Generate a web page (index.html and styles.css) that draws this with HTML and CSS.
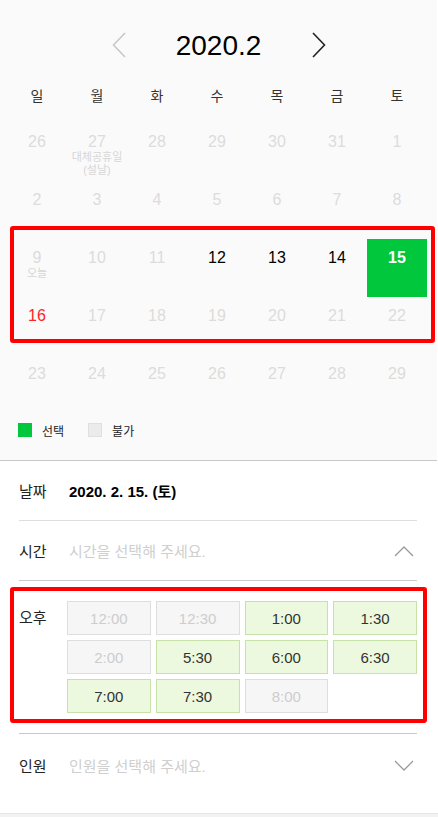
FILE: index.html
```html
<!DOCTYPE html>
<html lang="ko">
<head>
<meta charset="utf-8">
<title>예약</title>
<link rel="stylesheet" href="styles.css">
</head>
<body>
<div class="page">
  <section class="calendar">
    <div class="cal-head">
      <svg class="arrow prev" width="14" height="26" viewBox="0 0 14 26"><polyline points="13,1 1.5,13 13,25" fill="none" stroke="#c8c8c8" stroke-width="1.6"/></svg>
      <div class="title">2020.2</div>
      <svg class="arrow next" width="14" height="26" viewBox="0 0 14 26"><polyline points="1,1 12.5,13 1,25" fill="none" stroke="#222" stroke-width="1.6"/></svg>
    </div>
    <div class="weekdays">
      <span>일</span><span>월</span><span>화</span><span>수</span><span>목</span><span>금</span><span>토</span>
    </div>
    <div class="days">
      <div class="day off">26</div>
      <div class="day off">27<span class="note">대체공휴일<br>(설날)</span></div>
      <div class="day off">28</div>
      <div class="day off">29</div>
      <div class="day off">30</div>
      <div class="day off">31</div>
      <div class="day off">1</div>
      <div class="day off">2</div>
      <div class="day off">3</div>
      <div class="day off">4</div>
      <div class="day off">5</div>
      <div class="day off">6</div>
      <div class="day off">7</div>
      <div class="day off">8</div>
      <div class="day off">9<span class="note">오늘</span></div>
      <div class="day off">10</div>
      <div class="day off">11</div>
      <div class="day">12</div>
      <div class="day">13</div>
      <div class="day">14</div>
      <div class="day selected">15</div>
      <div class="day holiday">16</div>
      <div class="day off">17</div>
      <div class="day off">18</div>
      <div class="day off">19</div>
      <div class="day off">20</div>
      <div class="day off">21</div>
      <div class="day off">22</div>
      <div class="day off">23</div>
      <div class="day off">24</div>
      <div class="day off">25</div>
      <div class="day off">26</div>
      <div class="day off">27</div>
      <div class="day off">28</div>
      <div class="day off">29</div>
    </div>
    <div class="legend">
      <span class="swatch sw-sel"></span><span class="legend-text">선택</span>
      <span class="swatch sw-off"></span><span class="legend-text">불가</span>
    </div>
  </section>

  <section class="details">
    <div class="row row-date">
      <span class="label">날짜</span>
      <span class="value">2020. 2. 15. (토)</span>
    </div>
    <div class="row row-time">
      <span class="label">시간</span>
      <span class="placeholder">시간을 선택해 주세요.</span>
      <svg class="chev" width="20" height="12" viewBox="0 0 20 12"><polyline points="1,11 10,2 19,11" fill="none" stroke="#9a9a9a" stroke-width="1.3"/></svg>
    </div>
    <div class="time-panel">
      <span class="label period">오후</span>
      <div class="slots">
        <div class="slot na">12:00</div>
        <div class="slot na">12:30</div>
        <div class="slot ok">1:00</div>
        <div class="slot ok">1:30</div>
        <div class="slot na">2:00</div>
        <div class="slot ok">5:30</div>
        <div class="slot ok">6:00</div>
        <div class="slot ok">6:30</div>
        <div class="slot ok">7:00</div>
        <div class="slot ok">7:30</div>
        <div class="slot na">8:00</div>
      </div>
    </div>
    <div class="row row-people">
      <span class="label">인원</span>
      <span class="placeholder">인원을 선택해 주세요.</span>
      <svg class="chev" width="20" height="12" viewBox="0 0 20 12"><polyline points="1,1 10,10 19,1" fill="none" stroke="#9a9a9a" stroke-width="1.3"/></svg>
    </div>
  </section>
  <div class="bottom-strip"></div>

  <div class="mark mark-week"></div>
  <div class="mark mark-time"></div>
</div>
</body>
</html>
```

FILE: styles.css
```css
* { box-sizing: border-box; }
html, body { margin: 0; padding: 0; background: #fff; }
body {
  font-family: "Liberation Sans", "Noto Sans CJK KR", sans-serif;
  color: #333;
}
.page { position: relative; width: 438px; min-height: 817px; }

.calendar {
  background: #fafafa;
  padding-top: 31px;
  padding-bottom: 23px;
  border-bottom: 1px solid #c8c8c8;
  margin-right: 1px;
}
.cal-head {
  display: flex;
  justify-content: center;
  align-items: center;
  height: 30px;
  gap: 50px;
}
.cal-head .arrow { display: block; margin-top: -2px; }
.title {
  font-size: 28px;
  color: #000;
  line-height: 30px;
  width: 86px;
  text-align: center;
}
.weekdays {
  display: grid;
  grid-template-columns: repeat(7, 60px);
  margin: 23px 0 0 7px;
  height: 24px;
}
.weekdays span {
  text-align: center;
  font-size: 14px;
  line-height: 24px;
  color: #333;
}
.days {
  display: grid;
  grid-template-columns: repeat(7, 60px);
  grid-auto-rows: 58px;
  margin: 15px 0 0 7px;
}
.day {
  display: flex;
  flex-direction: column;
  align-items: center;
  padding-top: 10px;
  font-size: 16px;
  line-height: 18px;
  color: #000;
}
.day.off { color: #dcdcdc; }
.day.holiday { color: #ff2424; }
.day.selected {
  background: #00c73c;
  color: #fff;
  font-weight: bold;
}
.note {
  font-size: 11px;
  line-height: 13px;
  color: #d6d6d6;
  text-align: center;
  white-space: nowrap;
}

.legend {
  display: flex;
  align-items: center;
  height: 14px;
  margin: 10px 0 0 18px;
}
.swatch { width: 14px; height: 14px; display: inline-block; }
.sw-sel { background: #00c73c; }
.sw-off { background: #ebebeb; border: 1px solid #e0e0e0; }
.legend-text {
  font-size: 12px;
  color: #222;
  margin-left: 10px;
  margin-right: 24px;
}

.details { padding: 0 21px 0 19px; }
.row {
  display: flex;
  align-items: center;
  height: 60px;
  border-bottom: 1px solid #dedede;
}
.row-time { border-bottom-color: #cacaca; }
.label {
  font-size: 15px;
  color: #222;
  width: 50px;
  flex: none;
}
.value {
  font-size: 15px;
  font-weight: bold;
  color: #000;
}
.placeholder {
  font-size: 15px;
  color: #cfcfcf;
  flex: 1;
}
.chev { display: block; margin-right: 3px; }

.time-panel {
  display: flex;
  padding: 20px 0 20px;
  border-bottom: 1px solid #cacaca;
}
.period { width: 48px; line-height: 34px; }
.slots {
  flex: 1;
  display: grid;
  grid-template-columns: repeat(4, 1fr);
  grid-auto-rows: 34px;
  column-gap: 5px;
  row-gap: 5px;
}
.slot {
  display: flex;
  align-items: center;
  justify-content: center;
  font-size: 15px;
  border: 1px solid;
}
.slot.ok { background: #edf9de; border-color: #c6e2a8; color: #333; }
.slot.na { background: #f6f6f6; border-color: #dedede; color: #cdcdcd; }

.row-people { height: 63px; border-bottom: none; }

.bottom-strip {
  margin-top: 16px;
  height: 5px;
  background: #f2f2f2;
  border-top: 1px solid #e6e6e6;
}

.mark {
  position: absolute;
  border: 4px solid #ff0000;
  border-radius: 3px;
  pointer-events: none;
}
.mark-week { left: 10px; top: 226px; width: 425px; height: 117px; }
.mark-time { left: 10px; top: 587px; width: 417px; height: 136px; }
```
